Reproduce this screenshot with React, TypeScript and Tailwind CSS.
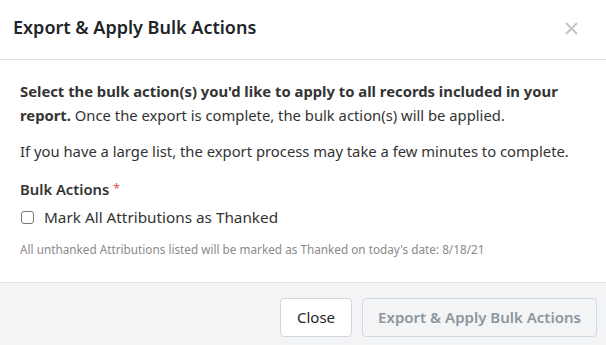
import React from "react";

export default function App() {
  return (
    <div
      className="w-[606px] h-[345px] overflow-hidden bg-white flex flex-col text-[#212529]"
      style={{ fontFamily: '"Noto Sans", "Open Sans", sans-serif' }}
    >
      <div className="h-[60px] shrink-0 border-b border-[#dee2e6] flex items-start justify-between pl-[13px] pr-[28px] pt-[14px]">
        <h1 className="text-[18px] leading-[26px] font-semibold">Export &amp; Apply Bulk Actions</h1>
        <button className="mt-[8px] text-[#c4c4c4]" aria-label="Close">
          <svg width="13" height="13" viewBox="0 0 13 13" fill="none" stroke="currentColor" strokeWidth="2">
            <path d="M1 1 L12 12 M12 1 L1 12" />
          </svg>
        </button>
      </div>
      <div className="flex-1 px-[20px] pt-[19px] text-[14.8px] leading-[24px] text-[#333]">
        <p className="mb-[12px]">
          <strong className="font-bold">Select the bulk action(s) you'd like to apply to all records included in your</strong>{" "}
          <strong className="font-bold">report.</strong> Once the export is complete, the bulk action(s) will be applied.
        </p>
        <p className="mb-[15px]">If you have a large list, the export process may take a few minutes to complete.</p>
        <div className="font-semibold leading-[22px]">
          Bulk Actions <span className="text-[#e55353] font-normal text-[12px] align-top">*</span>
        </div>
        <label className="flex items-center gap-[10px] mt-[6px] leading-[22px] text-[15.3px]">
          <span className="w-[13px] h-[13px] ml-[1px] border border-[#767676] rounded-[3px] bg-white shrink-0" />
          <span>Mark All Attributions as Thanked</span>
        </label>
        <div className="text-[11.75px] leading-[16px] text-[#8a8a8a] mt-[13px]">
          All unthanked Attributions listed will be marked as Thanked on today's date: 8/18/21
        </div>
      </div>
      <div className="h-[63px] shrink-0 border-t border-[#e2e4e8] bg-[#f3f4f6] flex items-start justify-end gap-[10px] pr-[9px] pt-[15px]">
        <button className="h-[39px] w-[72px] bg-white border border-[#d4d7dc] rounded-[4px] text-[15px] text-[#212529]">
          Close
        </button>
        <button className="h-[39px] w-[235px] bg-[#f3f4f6] border border-[#d4d7dc] rounded-[4px] text-[15px] text-[#8f959c] font-semibold">
          Export &amp; Apply Bulk Actions
        </button>
      </div>
    </div>
  );
}
